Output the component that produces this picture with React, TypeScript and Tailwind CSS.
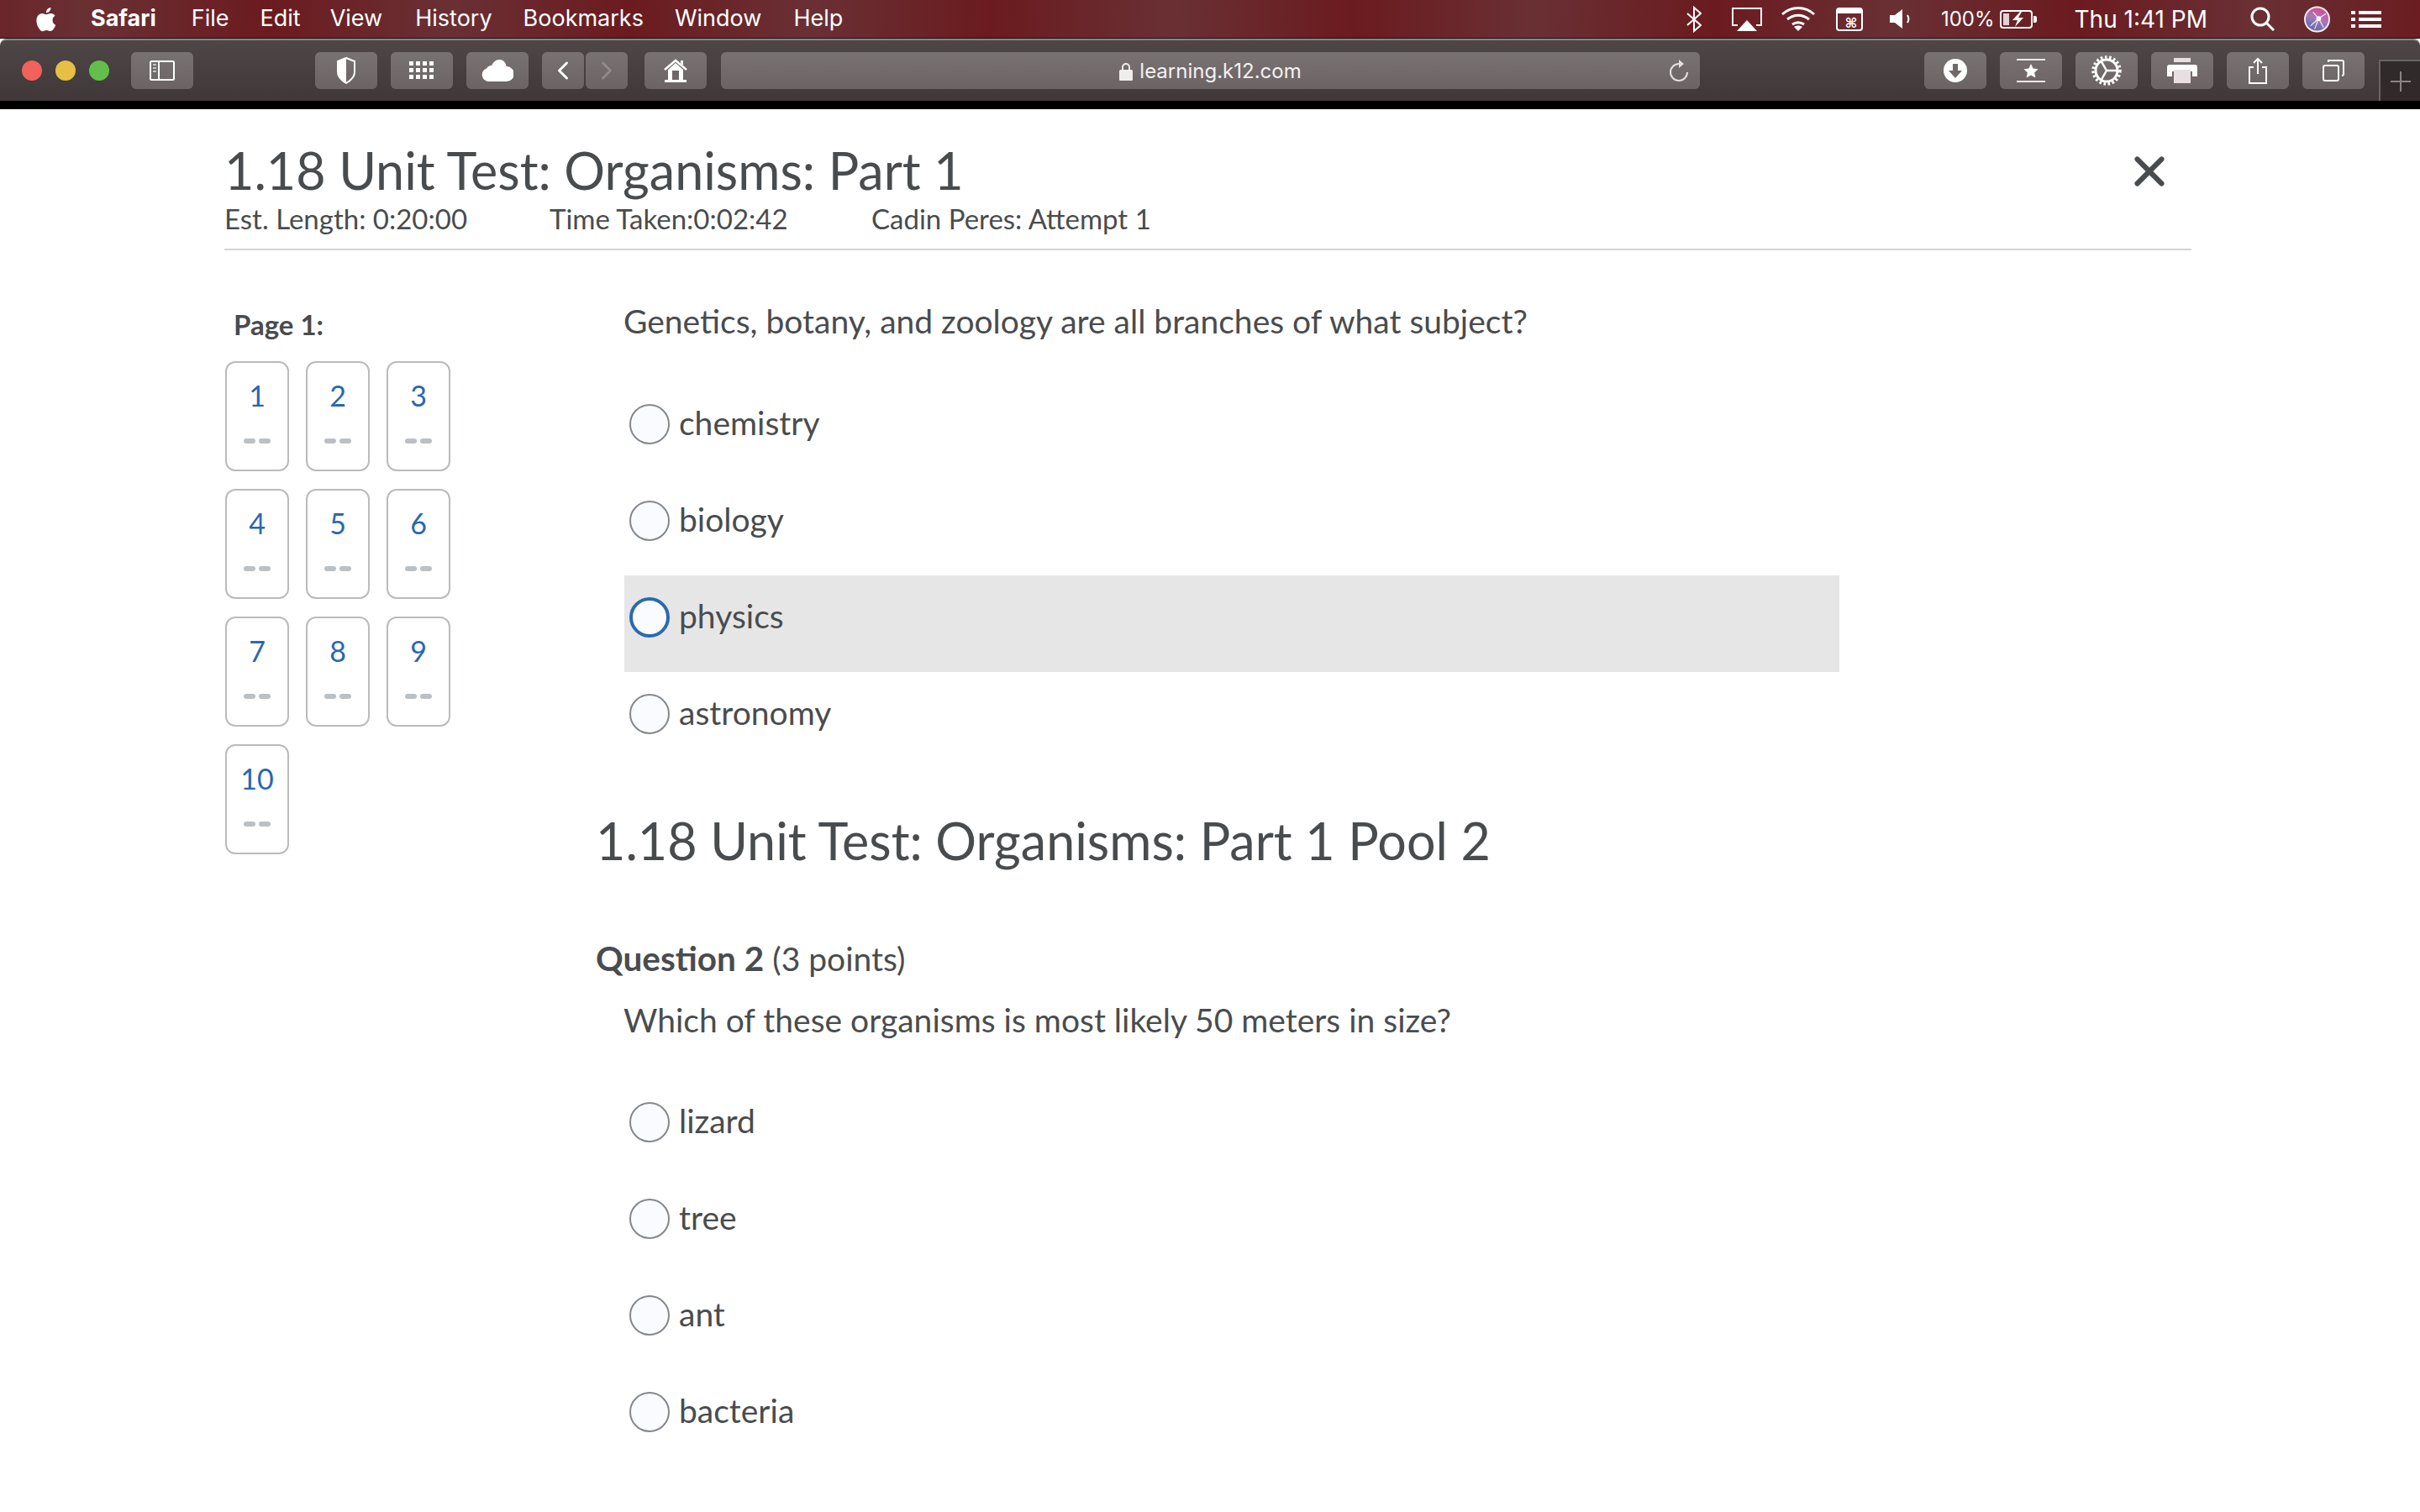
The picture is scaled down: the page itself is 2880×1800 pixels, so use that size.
import { ChevronLeft, ChevronRight, X } from 'lucide-react';
import type { ReactNode } from 'react';

const menus = [
  { label: 'File', cls: 'ml-[42px]' },
  { label: 'Edit', cls: 'ml-[37px]' },
  { label: 'View', cls: 'ml-[35px]' },
  { label: 'History', cls: 'ml-[39px]' },
  { label: 'Bookmarks', cls: 'ml-[37px]' },
  { label: 'Window', cls: 'ml-[37px]' },
  { label: 'Help', cls: 'ml-[38px]' },
];

function AppleLogo() {
  return (
    <svg width="28" height="34" viewBox="0 0 24 28" fill="white">
      <path d="M17.6 14.9c0-3 2.4-4.400 2.600-4.500-1.400-2.100-3.600-2.400-4.400-2.400-1.900-.2-3.700 1.100-4.600 1.100-1 0-2.400-1.100-4-1.100-2 0-3.900 1.200-5 3-2.100 3.700-.5 9.200 1.500 12.200 1 1.500 2.200 3.100 3.800 3 1.500-.1 2.100-1 3.900-1 1.800 0 2.400 1 4 .9 1.600 0 2.700-1.500 3.700-2.900 1.200-1.700 1.600-3.300 1.700-3.400-.1 0-3.200-1.200-3.200-4.900z" />
      <path d="M14.600 5.700c.8-1 1.400-2.400 1.200-3.700-1.200 0-2.600.8-3.500 1.800-.8.9-1.400 2.300-1.200 3.600 1.300.1 2.700-.7 3.500-1.700z" />
    </svg>
  );
}

function ToolButton({ children, className = 'w-[74px]' }: { children?: ReactNode; className?: string }) {
  return (
    <div className={`h-[44px] ${className} shrink-0 rounded-[6px] bg-gradient-to-b from-[#797272] to-[#6b6364] flex items-center justify-center`}>
      {children}
    </div>
  );
}

function Radio({ active }: { active?: boolean }) {
  return (
    <span
      className={
        active
          ? 'block w-[48px] h-[48px] shrink-0 rounded-full border-[4px] border-[#2a6ab0] bg-[#f9fbff]'
          : 'block w-[48px] h-[48px] shrink-0 rounded-full border-2 border-[#85888a] bg-[#f9fbff]'
      }
    />
  );
}

function Option({ label, active }: { label: string; active?: boolean }) {
  return (
    <div className={`h-[115px] w-[1446px] pl-[6px] pt-[26px] flex items-start gap-[11px] ${active ? 'bg-[#e6e6e6]' : ''}`}>
      <Radio active={active} />
      <span className="text-[39px] leading-[48px] -mt-[2px]">{label}</span>
    </div>
  );
}

function NavCard({ n }: { n: number }) {
  return (
    <div className="w-[76px] h-[131px] rounded-[12px] border-2 border-[#b9bbbc] flex flex-col items-center pt-[19px]">
      <span className="text-[34px] leading-[40px] text-[#2a67b0]">{n}</span>
      <div className="flex gap-[4px] mt-[31px]">
        <span className="w-[14px] h-[6px] rounded-full bg-[#bcc0c4]" />
        <span className="w-[14px] h-[6px] rounded-full bg-[#bcc0c4]" />
      </div>
    </div>
  );
}

export default function App() {
  return (
    <div className="w-[2880px] h-[1800px] overflow-hidden bg-white text-[#494c4e] font-['Lato',sans-serif]">
      {/* mac menu bar */}
      <div className="h-[46px] border-b border-[#1c1010] flex items-center pl-[42px] pr-[46px] text-white text-[27px] font-['Inter',sans-serif] bg-[repeating-linear-gradient(90deg,#693034_105px,#6b1b1f_320px,#693034_535px)]">
        <AppleLogo />
        <span className="font-bold ml-[38px]">Safari</span>
        {menus.map((m) => (
          <span key={m.label} className={m.cls}>{m.label}</span>
        ))}
        <div className="ml-auto flex items-center">
          <svg width="18" height="32" viewBox="0 0 18 32" fill="none" stroke="white" strokeWidth="2">
            <path d="M1 9l16 14-8 7V2l8 7L1 23" />
          </svg>
          <svg className="ml-[36px]" width="36" height="28" viewBox="0 0 36 28" fill="none" stroke="white" strokeWidth="2">
            <path d="M7 21H1V1h34v20h-6" />
            <path d="M18 15l12 13H6z" fill="white" stroke="none" />
          </svg>
          <svg className="ml-[23px]" width="40" height="29" viewBox="0 0 40 29" fill="none" stroke="white" strokeWidth="3">
            <path d="M1 9c11-10 27-10 38 0" />
            <path d="M7 15c8-6.500 18-6.500 26 0" />
            <path d="M13 21c4.500-3 9.500-3 14 0" />
            <path d="M20 29l-5-5c3-2 7-2 10 0z" fill="white" stroke="none" />
          </svg>
          <svg className="ml-[25px]" width="32" height="28" viewBox="0 0 32 28" fill="none">
            <rect x="1" y="1" width="30" height="26" rx="3" stroke="white" strokeWidth="2" />
            <rect x="1" y="1" width="30" height="6" fill="white" />
            <text x="18" y="24" fontSize="16" fontWeight="bold" fill="white" textAnchor="middle" fontFamily="DejaVu Sans">⌘</text>
          </svg>
          <svg className="ml-[32px]" width="25" height="23" viewBox="0 0 25 23" fill="white">
            <path d="M0 7h6l9-7v23l-9-7H0z" />
            <path d="M21 7c1.800 3 1.800 6 0 9" fill="none" stroke="white" strokeWidth="2" />
          </svg>
          <span className="ml-[36px] text-[24px]">100%</span>
          <svg className="ml-[6px]" width="44" height="22" viewBox="0 0 44 22" fill="none">
            <rect x="1" y="1" width="37" height="20" rx="3" stroke="white" strokeWidth="2" />
            <path d="M40 7h2a2 2 0 0 1 2 2v4a2 2 0 0 1-2 2h-2z" fill="white" />
            <path d="M24 2l-9 10h6l-3 8 10-11h-6l4-7z" fill="white" />
            <rect x="4" y="4" width="7" height="14" fill="white" opacity="0.8" />
          </svg>
          <span className="ml-[45px] text-[28px]">Thu 1:41 PM</span>
          <svg className="ml-[51px]" width="29" height="29" viewBox="0 0 29 29" fill="none" stroke="white" strokeWidth="3">
            <circle cx="12" cy="12" r="10" />
            <path d="M19 19l9 9" />
          </svg>
          <svg className="ml-[35px]" width="31" height="32" viewBox="0 0 32 32">
            <defs>
              <linearGradient id="siri" x1="0.7" y1="0" x2="0.3" y2="1">
                <stop offset="0" stopColor="#d8468a" />
                <stop offset="0.5" stopColor="#a67ab8" />
                <stop offset="1" stopColor="#4d68a8" />
              </linearGradient>
            </defs>
            <circle cx="16" cy="16" r="15" fill="url(#siri)" stroke="#f6ecf1" strokeWidth="2" />
            <path d="M18 15L8 24M18 15l9-6M18 15l6 11M18 15L11 7M18 15l-5 13" stroke="white" strokeWidth="1.200" opacity="0.9" />
            <circle cx="18" cy="15" r="3" fill="white" />
          </svg>
          <svg className="ml-[25px]" width="36" height="20" viewBox="0 0 36 20" fill="white">
            <rect x="0" y="0" width="5" height="4" />
            <rect x="0" y="8" width="5" height="4" />
            <rect x="0" y="16" width="5" height="4" />
            <rect x="9" y="0" width="27" height="4" />
            <rect x="9" y="8" width="27" height="4" />
            <rect x="9" y="16" width="27" height="4" />
          </svg>
        </div>
      </div>

      {/* safari toolbar */}
      <div className="h-[74px] rounded-t-[8px] border-t-2 border-[#8b8483] bg-gradient-to-b from-[#4f4647] to-[#3f3838] flex items-center pl-[26px]">
        <span className="w-[24px] h-[24px] rounded-full bg-[#f0625b]" />
        <span className="w-[24px] h-[24px] rounded-full bg-[#e5c043] ml-[16px]" />
        <span className="w-[24px] h-[24px] rounded-full bg-[#62c04a] ml-[16px]" />
        <div className="ml-[26px]">
          <ToolButton>
            <svg width="30" height="24" viewBox="0 0 30 24" fill="none" stroke="white" strokeWidth="2">
              <rect x="1" y="1" width="28" height="22" rx="1.500" />
              <path d="M11 1v22" />
              <path d="M4 5h4M4 9h4M4 13h4" stroke="#c8c4c4" />
            </svg>
          </ToolButton>
        </div>
        <div className="ml-[145px] flex gap-[16px]">
          <ToolButton>
            <svg width="24" height="32" viewBox="0 0 24 32" fill="none">
              <path d="M12 1L2 5v13c0 6 5 10 10 13 5-3 10-7 10-13V5z" stroke="white" strokeWidth="2" />
              <path d="M12 1L2 5v13c0 6 5 10 10 13z" fill="white" />
            </svg>
          </ToolButton>
          <ToolButton>
            <svg width="30" height="22" viewBox="0 0 30 22" fill="white">
              {[0, 8, 16].map((y) =>
                [0, 8, 16, 24].map((x) => <rect key={`${x}-${y}`} x={x} y={y} width="5" height="5" />)
              )}
            </svg>
          </ToolButton>
          <ToolButton>
            <svg width="38" height="26" viewBox="0 0 38 26" fill="white">
              <path d="M8 26a8 8 0 0 1-2-15.500 7 7 0 0 1 6-3.500C14 3 17 0 21 0c5 0 8 3.500 8.500 8A9 9 0 0 1 30 26z" />
            </svg>
          </ToolButton>
        </div>
        <div className="ml-[16px] flex gap-[2px]">
          <ToolButton className="w-[50px]">
            <ChevronLeft size={36} color="white" strokeWidth={2} />
          </ToolButton>
          <ToolButton className="w-[50px]">
            <ChevronRight size={36} color="#908a8a" strokeWidth={2} />
          </ToolButton>
        </div>
        <div className="ml-[20px]">
          <ToolButton>
            <svg width="28" height="28" viewBox="0 0 28 28" fill="none">
              <path d="M1 13L14 2l13 11" stroke="white" strokeWidth="2.500" />
              <path d="M20 2h3v6l-3-3z" fill="white" />
              <path d="M5 13l9-8 9 8v12H5z" fill="white" />
              <rect x="10" y="14" width="8" height="11" fill="#6f6868" />
              <rect x="1" y="25" width="26" height="3" fill="white" />
            </svg>
          </ToolButton>
        </div>
        <div className="ml-[17px] w-[1165px] h-[44px] pt-[1px] rounded-[6px] bg-gradient-to-b from-[#797272] to-[#6b6364] relative flex items-center justify-center text-[#f4f1f1] text-[24px] font-['Inter',sans-serif]">
          <svg className="mr-[8px]" width="16" height="22" viewBox="0 0 16 22" fill="none">
            <path d="M4 10V6a4 4 0 0 1 8 0v4" stroke="#f0eded" strokeWidth="2" />
            <rect x="0" y="9" width="16" height="13" rx="1.500" fill="#f0eded" />
          </svg>
          learning.k12.com
          <svg className="absolute right-[13px] top-[9px]" width="24" height="28" viewBox="0 0 24 28" fill="none" stroke="#e4e0e0" strokeWidth="2">
            <path d="M12 5a10 10 0 1 0 10 10" />
            <path d="M12 0l6 5-6 5z" fill="#e4e0e0" stroke="none" />
          </svg>
        </div>
        <div className="ml-[267px] flex gap-[16px]">
          <ToolButton>
            <svg width="28" height="28" viewBox="0 0 28 28">
              <circle cx="14" cy="14" r="14" fill="white" />
              <path d="M11 6h6v8h5l-8 9-8-9h5z" fill="#6f6868" />
            </svg>
          </ToolButton>
          <ToolButton>
            <svg width="34" height="28" viewBox="0 0 34 28" fill="#efe9e9">
              <rect x="0" y="0" width="34" height="2" />
              <rect x="0" y="26" width="34" height="2" />
              <path d="M17 6l2.600 5.600 6 .7-4.500 4.100 1.300 6L17 19.400l-5.400 3 1.300-6-4.500-4.100 6-.7z" fill="white" />
            </svg>
          </ToolButton>
          <ToolButton>
            <svg width="36" height="36" viewBox="0 0 36 36" fill="none" stroke="white">
              <circle cx="18" cy="18" r="13" strokeWidth="3" />
              <circle cx="18" cy="18" r="16" strokeWidth="3.500" strokeDasharray="2.600 2.600" />
              <path d="M18 18h13M18 18L11.500 6.700M18 18L11.500 29.300" strokeWidth="2.500" />
            </svg>
          </ToolButton>
          <ToolButton>
            <svg width="36" height="30" viewBox="0 0 36 30">
              <rect x="8" y="0" width="20" height="5" fill="#e9dfe2" />
              <path d="M3 8h30a3 3 0 0 1 3 3v11h-6v-6H6v6H0V11a3 3 0 0 1 3-3z" fill="white" />
              <rect x="8" y="14" width="20" height="16" fill="#e9dfe2" />
            </svg>
          </ToolButton>
          <ToolButton>
            <svg width="24" height="32" viewBox="0 0 24 32" fill="none" stroke="white" strokeWidth="2">
              <path d="M7 12H2v19h20V12h-5" />
              <path d="M12 20V2M7 7l5-5 5 5" />
            </svg>
          </ToolButton>
          <ToolButton>
            <svg width="26" height="26" viewBox="0 0 26 26" fill="none" stroke="white" strokeWidth="2">
              <rect x="1" y="7" width="18" height="18" rx="2" />
              <path d="M7 3V1h16a2 2 0 0 1 2 2v14a2 2 0 0 1-2 2" />
            </svg>
          </ToolButton>
        </div>
        <div className="ml-[17px] w-[49px] h-[49px] self-end bg-[#302a2b] border-l-2 border-t-2 border-[#6a6363] flex items-center justify-center">
          <svg width="24" height="24" viewBox="0 0 24 24" stroke="#8a8484" strokeWidth="2">
            <path d="M12 0v24M0 12h24" />
          </svg>
        </div>
      </div>
      <div className="h-[10px] bg-black" />

      {/* test header */}
      <div className="ml-[267px] w-[2341px] pt-[37px] border-b-2 border-[#d3d4d5] h-[168px] relative">
        <h1 className="text-[61px] leading-[72px] font-normal">1.18 Unit Test: Organisms: Part 1</h1>
        <div className="flex text-[33px] leading-[40px] mt-[1px]">
          <span className="w-[387px]">Est. Length: 0:20:00</span>
          <span className="w-[383px]">Time Taken:0:02:42</span>
          <span>Cadin Peres: Attempt 1</span>
        </div>
        <X className="absolute right-[21px] top-[45px]" size={58} strokeWidth={2.5} color="#494c4e" />
      </div>

      <div className="ml-[267px] flex">
        {/* question nav */}
        <div className="w-[442px] shrink-0 pt-[68px]">
          <div className="pl-[11px] font-bold text-[33px] leading-[40px]">Page 1:</div>
          <div className="grid grid-cols-[76px_76px_76px] gap-x-[20px] gap-y-[21px] mt-[24px] ml-[1px]">
            {[1, 2, 3, 4, 5, 6, 7, 8, 9, 10].map((n) => (
              <NavCard key={n} n={n} />
            ))}
          </div>
        </div>

        {/* questions */}
        <div className="flex-1">
          <div className="pl-[33px] pt-[60px] text-[39px] leading-[48px]">
            Genetics, botany, and zoology are all branches of what subject?
          </div>
          <div className="ml-[34px] mt-[49px]">
            <Option label="chemistry" />
            <Option label="biology" />
            <Option label="physics" active />
            <Option label="astronomy" />
          </div>
          <h2 className="text-[61px] leading-[72px] font-normal mt-[50px]">1.18 Unit Test: Organisms: Part 1 Pool 2</h2>
          <div className="text-[39px] leading-[48px] mt-[80px]">
            <span className="font-bold text-[40.5px]">Question 2</span> (3 points)
          </div>
          <div className="pl-[33px] text-[39px] leading-[48px] mt-[25px]">
            Which of these organisms is most likely 50 meters in size?
          </div>
          <div className="ml-[34px] mt-[48px]">
            <Option label="lizard" />
            <Option label="tree" />
            <Option label="ant" />
            <Option label="bacteria" />
          </div>
        </div>
      </div>
    </div>
  );
}
